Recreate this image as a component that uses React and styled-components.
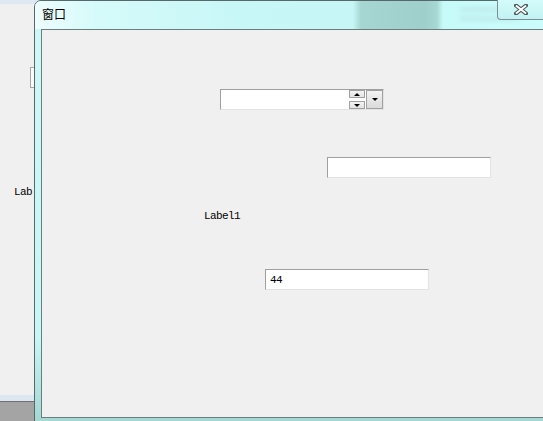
import React from 'react'
import styled, { createGlobalStyle } from 'styled-components'

const Global = createGlobalStyle`
  html, body {
    margin: 0;
    padding: 0;
    width: 543px;
    height: 421px;
    overflow: hidden;
    background: #f0f0f0;
  }
`

const Desktop = styled.div`
  position: relative;
  width: 543px;
  height: 421px;
  overflow: hidden;
  background: #f0f0f0;
  font-family: "Liberation Mono", "DejaVu Sans Mono", monospace;
`

const TopStrip = styled.div`
  height: 4px;
  background: #dde8f3;
`

const BottomBar = styled.div`
  position: absolute;
  left: 0;
  right: 0;
  bottom: 0;
  height: 26px;
  background: #dce7f1;
  &::after {
    content: '';
    position: absolute;
    left: 0;
    right: 0;
    top: 6px;
    bottom: 0;
    border-top: 1px solid #707070;
    background: #a4a4a4;
  }
`

const GhostBox = styled.div`
  position: absolute;
  left: 30px;
  top: 67px;
  width: 20px;
  height: 19px;
  border: 1px solid #a6a6a6;
  background: #fbfbfb;
`

const GhostLabel = styled.span`
  position: absolute;
  left: 14px;
  top: 186px;
  font-size: 11px;
  letter-spacing: -0.6px;
  color: #000;
`

const Window = styled.div`
  position: absolute;
  left: 34px;
  top: 0;
  width: 540px;
  height: 424px;
  border: 1px solid #56686a;
  border-radius: 7px 7px 0 0;
  background: linear-gradient(180deg, #cdf8f8 0%, #c6f6f5 80%, #a4d6d2 100%);
  display: flex;
  flex-direction: column;
  box-sizing: border-box;
`

const TitleBar = styled.div`
  position: relative;
  height: 28px;
  flex: none;
  border-radius: 6px 6px 0 0;
  background: linear-gradient(90deg,
    #eefdfd 0px, #d6fafa 60px, #c8f7f7 200px, #c6f6f6 318px,
    #a6d6d2 326px, #9fcfcb 390px, #a8d8d4 402px, #c6fbfa 408px, #cdfcfc 540px);
`

const Title = styled.span`
  position: absolute;
  left: 7px;
  top: 6px;
  font-family: "Noto Sans CJK SC", sans-serif;
  font-size: 12px;
  line-height: 14px;
  color: #000;
`

const Ghost = styled.span`
  position: absolute;
  left: ${p => p.x}px;
  top: ${p => p.y}px;
  width: ${p => p.w}px;
  height: 3px;
  background: #9fb4b4;
  filter: blur(2.5px);
  opacity: 0.35;
`

const CloseButton = styled.div`
  position: absolute;
  left: 462px;
  top: -1px;
  width: 60px;
  height: 19px;
  border: 1px solid #7d8e8f;
  border-top: none;
  border-radius: 0 0 4px 4px;
  background: linear-gradient(180deg, #d4fbfb, #c2f2f2);
  svg {
    position: absolute;
    left: 16px;
    top: 4px;
  }
`

const ClientFrame = styled.div`
  flex: 1;
  margin: 0 5px 5px 6px;
  border: 1px solid #6c7d7e;
  border-right: none;
  background: #f0f0f0;
  position: relative;
`

const Canvas = styled.div`
  position: relative;
  width: 100%;
  height: 100%;
`

const Placed = styled.div`
  position: absolute;
  left: ${p => p.x}px;
  top: ${p => p.y}px;
`

const Sunken = styled.div`
  box-sizing: border-box;
  width: ${p => p.w}px;
  height: 21px;
  border: 1px solid;
  border-color: #a0a0a0 #e3e3e3 #e3e3e3 #a0a0a0;
  background: #fff;
  display: flex;
  align-items: center;
  padding-left: 4px;
  font-size: 11px;
  letter-spacing: -0.6px;
  color: #000;
`

const Combo = styled.div`
  box-sizing: border-box;
  width: 164px;
  height: 21px;
  border: 1px solid;
  border-color: #a0a0a0 #e3e3e3 #e3e3e3 #a0a0a0;
  background: #fff;
  display: flex;
  justify-content: flex-end;
`

const Spin = styled.div`
  display: flex;
  flex-direction: column;
  justify-content: space-between;
  width: 16px;
  margin-right: 1px;
`

const SpinButton = styled.div`
  box-sizing: border-box;
  height: 8px;
  border: 1px solid #a0a0a0;
  background: linear-gradient(180deg, #f4f4f4, #e2e2e2);
  display: flex;
  align-items: center;
  justify-content: center;
`

const DropButton = styled.div`
  box-sizing: border-box;
  width: 17px;
  height: 19px;
  border: 1px solid #a0a0a0;
  background: linear-gradient(180deg, #f3f3f3, #dadada);
  display: flex;
  align-items: center;
  justify-content: center;
`

const Tri = styled.div`
  width: 0;
  height: 0;
  border-left: 3px solid transparent;
  border-right: 3px solid transparent;
  ${p => p.up
    ? 'border-bottom: 3px solid #000;'
    : 'border-top: 3px solid #000;'}
`

const Label = styled.span`
  font-size: 11px;
  letter-spacing: -0.6px;
  color: #000;
  white-space: nowrap;
`

function CloseGlyph() {
  return (
    <svg width="14" height="11" viewBox="0 0 14 11">
      <path d="M2 1.5 L12 9.5 M12 1.5 L2 9.5" stroke="#4a5557" strokeWidth="4" strokeLinecap="round" />
      <path d="M2.5 2 L11.5 9 M11.5 2 L2.5 9" stroke="#ffffff" strokeWidth="2" strokeLinecap="round" />
    </svg>
  )
}

export default function App() {
  return (
    <>
      <Global />
      <Desktop>
        <TopStrip />
        <GhostBox />
        <GhostLabel>Lab</GhostLabel>
        <BottomBar />
        <Window>
          <TitleBar>
            <Title>窗口</Title>
            <Ghost x={425} y={7} w={55} />
            <Ghost x={425} y={16} w={60} />
            <CloseButton>
              <CloseGlyph />
            </CloseButton>
          </TitleBar>
          <ClientFrame>
            <Canvas>
              <Placed x={178} y={59}>
                <Combo>
                  <Spin>
                    <SpinButton><Tri up /></SpinButton>
                    <SpinButton><Tri /></SpinButton>
                  </Spin>
                  <DropButton><Tri /></DropButton>
                </Combo>
              </Placed>
              <Placed x={285} y={127}>
                <Sunken w={164} />
              </Placed>
              <Placed x={162} y={176}>
                <Label>Label1</Label>
              </Placed>
              <Placed x={223} y={239}>
                <Sunken w={164}>44</Sunken>
              </Placed>
            </Canvas>
          </ClientFrame>
        </Window>
      </Desktop>
    </>
  )
}
